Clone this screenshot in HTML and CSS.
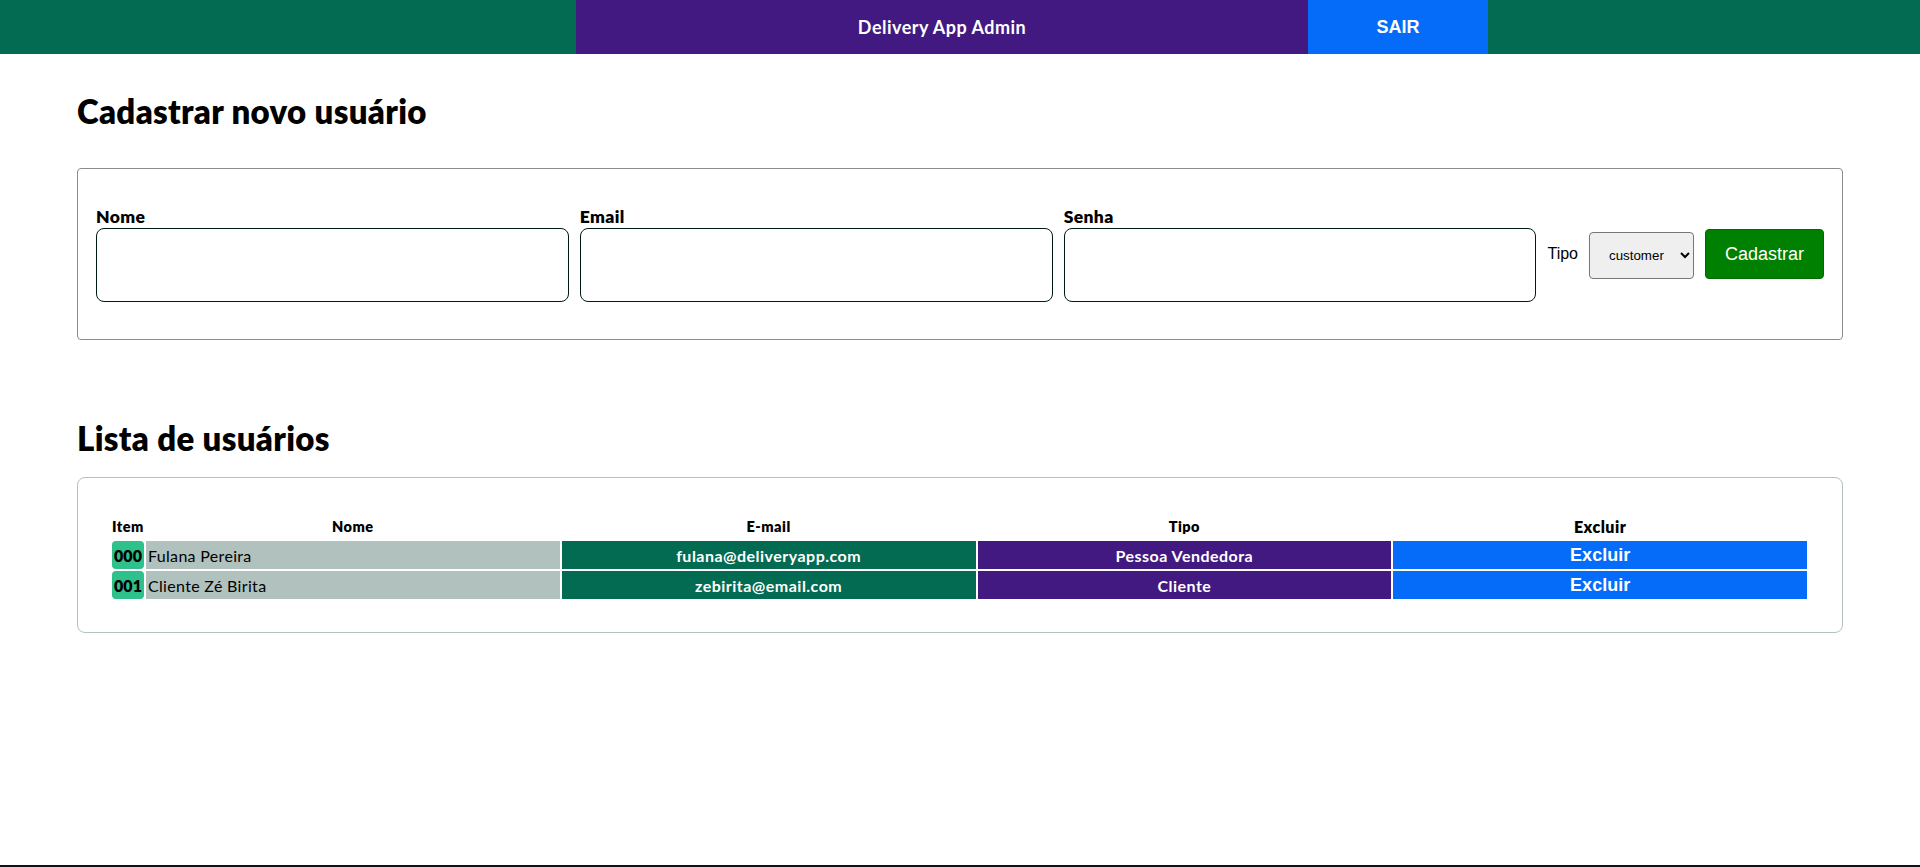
FILE: index.html
```html
<!DOCTYPE html>
<html lang="pt-BR">
<head>
<meta charset="utf-8">
<title>Delivery App Admin</title>
<link rel="stylesheet" href="styles.css">
</head>
<body>
<header class="topbar">
  <div class="topbar-spacer"></div>
  <div class="brand">Delivery App Admin</div>
  <button class="logout" type="button">SAIR</button>
</header>
<main class="page">
  <h1 class="section-title title-register">Cadastrar novo usuário</h1>
  <form class="register-card">
    <label class="field">
      <span class="field-label">Nome</span>
      <input class="field-input" type="text">
    </label>
    <label class="field">
      <span class="field-label">Email</span>
      <input class="field-input" type="email">
    </label>
    <label class="field">
      <span class="field-label">Senha</span>
      <input class="field-input" type="password">
    </label>
    <label class="type-field">
      <span class="type-label">Tipo</span>
      <select class="type-select">
        <option>customer</option>
        <option>seller</option>
        <option>administrator</option>
      </select>
    </label>
    <button class="submit-btn" type="button">Cadastrar</button>
  </form>

  <h1 class="section-title title-list">Lista de usuários</h1>
  <div class="list-card">
    <table class="users-table">
      <colgroup>
        <col class="col-item">
        <col>
        <col>
        <col>
        <col>
      </colgroup>
      <thead>
        <tr>
          <th class="th-small">Item</th>
          <th class="th-small">Nome</th>
          <th class="th-small">E-mail</th>
          <th class="th-small">Tipo</th>
          <th class="th-large">Excluir</th>
        </tr>
      </thead>
      <tbody>
        <tr>
          <td class="cell-item">000</td>
          <td class="cell-name">Fulana Pereira</td>
          <td class="cell-email">fulana@deliveryapp.com</td>
          <td class="cell-role">Pessoa Vendedora</td>
          <td class="cell-remove"><button class="remove-btn" type="button">Excluir</button></td>
        </tr>
        <tr>
          <td class="cell-item">001</td>
          <td class="cell-name">Cliente Zé Birita</td>
          <td class="cell-email">zebirita@email.com</td>
          <td class="cell-role">Cliente</td>
          <td class="cell-remove"><button class="remove-btn" type="button">Excluir</button></td>
        </tr>
      </tbody>
    </table>
  </div>
</main>
<footer class="page-footer"></footer>
</body>
</html>
```

FILE: styles.css
```css
* {
  box-sizing: border-box;
}

body {
  margin: 0;
  font-family: "Lato", "Open Sans", sans-serif;
  letter-spacing: 0.03em;
  color: #000;
  background: #fff;
}

/* ---------- top bar ---------- */
.topbar {
  display: flex;
  height: 54px;
  background: #036b52;
}

.topbar-spacer {
  width: 576px;
}

.brand {
  width: 732px;
  display: flex;
  align-items: center;
  justify-content: center;
  background: #421981;
  color: #fff;
  font-weight: 700;
  font-size: 18px;
}

.logout {
  width: 180px;
  border: 0;
  margin: 0;
  padding: 0;
  background: #056cf9;
  color: #fff;
  font-family: "Liberation Sans", Arial, sans-serif;
  font-weight: 700;
  font-size: 18px;
  letter-spacing: 0;
  cursor: pointer;
}

/* ---------- page ---------- */
.page {
  min-height: 811px;
  padding: 0 77px;
  display: flex;
  flex-direction: column;
}

.section-title {
  margin: 0;
  font-size: 33px;
  line-height: 40px;
  font-weight: 800;
  letter-spacing: 0.01em;
}

.title-register {
  margin-top: 37px;
  margin-bottom: 37px;
}

.title-list {
  margin-top: 78px;
  margin-bottom: 19px;
}

/* ---------- register form ---------- */
.register-card {
  display: flex;
  align-items: center;
  gap: 11px;
  padding: 37px 18px;
  border: 1px solid #8c8c8c;
  border-radius: 4px;
}

.field {
  flex: 1;
  display: flex;
  flex-direction: column;
}

.field-label {
  display: block;
  font-size: 17.5px;
  line-height: 22px;
  font-weight: 800;
  letter-spacing: 0.02em;
}

.field-input {
  width: 100%;
  height: 74px;
  margin: 0;
  border: 1px solid #001a14;
  border-radius: 8px;
  background: #fff;
}

.type-field {
  display: flex;
  align-items: center;
  gap: 11px;
  font-family: "Liberation Sans", Arial, sans-serif;
  font-size: 16px;
  letter-spacing: 0;
}

.type-select {
  width: 105px;
  height: 47px;
  margin: 2px 0 0;
  padding: 0 10px 0 15px;
  border: 1px solid #767676;
  border-radius: 4px;
  background: #efefef;
  color: #000;
  font-family: "Liberation Sans", Arial, sans-serif;
  font-size: 13.33px;
}

.submit-btn {
  width: 119px;
  height: 50px;
  margin: 0;
  padding: 0;
  border: 1px solid #006a00;
  border-radius: 4px;
  background: #008000;
  color: #fff;
  font-family: "Liberation Sans", Arial, sans-serif;
  font-size: 18px;
  letter-spacing: 0;
  cursor: pointer;
}

/* ---------- users list ---------- */
.list-card {
  padding: 33px 33px 31px 32px;
  border: 1px solid #b1c2be;
  border-radius: 8px;
}

.users-table {
  width: 100%;
  table-layout: fixed;
  border-spacing: 2px;
}

.col-item {
  width: 32px;
}

.users-table th {
  height: 26px;
  padding: 0;
  font-weight: 800;
  text-align: center;
}

.th-small {
  font-size: 14.5px;
}

.th-large {
  font-size: 16px;
}

.users-table td {
  height: 28px;
  padding: 0;
  font-size: 16px;
}

.cell-item {
  background: #2fc18c;
  border-radius: 4px;
  font-weight: 800;
  text-align: center;
  letter-spacing: 0;
}

.cell-name {
  background: #b1c2be;
  padding-left: 2px !important;
  letter-spacing: 0.02em;
}

.cell-email {
  background: #036b52;
  color: #fff;
  font-weight: 700;
  text-align: center;
}

.cell-role {
  background: #421981;
  color: #fff;
  font-weight: 700;
  text-align: center;
}

.cell-remove {
  background: #056cf9;
}

.remove-btn {
  display: block;
  width: 100%;
  height: 28px;
  margin: 0;
  padding: 0;
  border: 0;
  background: transparent;
  color: #fff;
  font-family: "Liberation Sans", Arial, sans-serif;
  font-weight: 700;
  font-size: 18px;
  letter-spacing: 0;
  cursor: pointer;
}

/* ---------- footer ---------- */
.page-footer {
  height: 40px;
  background: #0f1216;
}
```
